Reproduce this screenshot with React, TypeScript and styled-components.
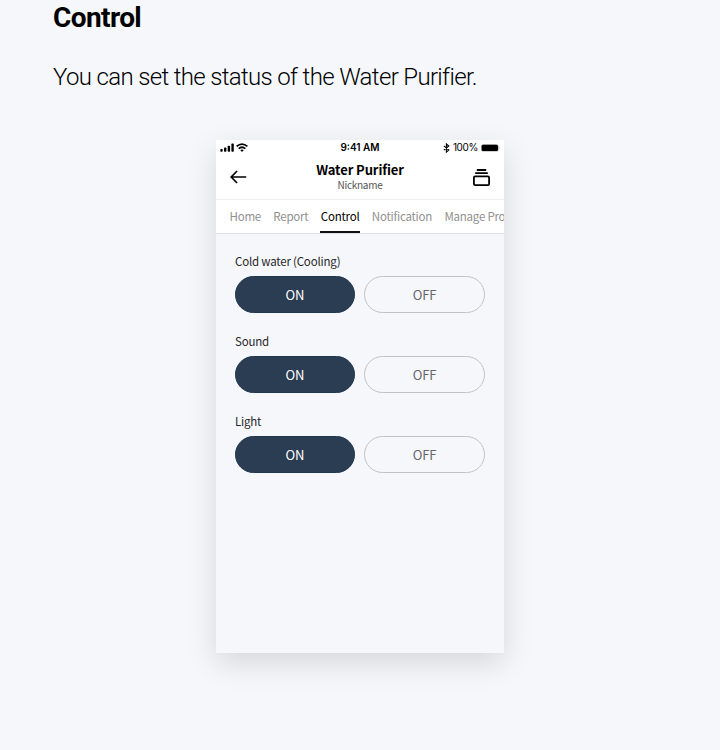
import React from "react";
import styled, { createGlobalStyle } from "styled-components";

const GlobalStyle = createGlobalStyle`
  *, *::before, *::after { box-sizing: border-box; }
  body { margin: 0; background: #f5f7fb; }
`;

const sans = `"Noto Sans CJK KR", "Noto Sans", sans-serif`;

const Page = styled.main`
  height: 750px;
  overflow: hidden;
  background: #f5f7fb;
  color: #000;
  font-family: Roboto, sans-serif;
`;

const Title = styled.h1`
  margin: 0 0 0 53px;
  padding-top: 1px;
  font-size: 28px;
  line-height: 34px;
  font-weight: 700;
  letter-spacing: -0.6px;
`;

const Lead = styled.p`
  margin: 27px 0 0 53px;
  font-size: 24px;
  line-height: 30px;
  font-weight: 300;
  letter-spacing: -0.655px;
  white-space: nowrap;
`;

const Phone = styled.section`
  width: 288px;
  height: 513px;
  margin: 48px auto 0;
  display: flex;
  flex-direction: column;
  background: #f5f7fb;
  box-shadow: 0 10px 28px rgba(0, 0, 0, 0.13);
  font-family: ${sans};
`;

const StatusBar = styled.div`
  height: 15px;
  padding: 0 4px;
  display: grid;
  grid-template-columns: 1fr auto 1fr;
  align-items: center;
  background: #fff;
  font-family: Inter, sans-serif;
  font-size: 10px;
  line-height: 15px;
`;

const StatusGroup = styled.div<{ $end?: boolean }>`
  display: flex;
  align-items: center;
  gap: ${(p) => (p.$end ? 3 : 2)}px;
  justify-content: ${(p) => (p.$end ? "flex-end" : "flex-start")};
`;

const Clock = styled.span`
  font-weight: 600;
`;

const Percent = styled.span`
  letter-spacing: -0.35px;
`;

const Header = styled.header`
  height: 44px;
  padding: 0 14px;
  display: grid;
  grid-template-columns: 17px 1fr 17px;
  align-items: center;
  background: #fff;
`;

const Heading = styled.div`
  display: flex;
  flex-direction: column;
  align-items: center;
`;

const Device = styled.strong`
  font-size: 13px;
  line-height: 16px;
  font-weight: 700;
  letter-spacing: -0.1px;
`;

const Nickname = styled.span`
  font-size: 10px;
  line-height: 14px;
  letter-spacing: -0.25px;
  color: #555;
`;

const Tabs = styled.nav`
  height: 35px;
  padding-left: 12.5px;
  display: flex;
  gap: 10.4px;
  overflow: hidden;
  background: #fff;
  border-top: 1px solid #eff0f2;
  border-bottom: 1px solid #dfe0e4;
`;

const Tab = styled.a<{ $active?: boolean }>`
  flex: none;
  height: 33px;
  padding: 0 1px;
  font-size: 11.5px;
  line-height: 33px;
  letter-spacing: -0.23px;
  white-space: nowrap;
  color: ${(p) => (p.$active ? "#000" : "#909090")};
  border-bottom: 2px solid ${(p) => (p.$active ? "#111" : "transparent")};
`;

const Settings = styled.div`
  padding: 18px 19px 0;
  display: flex;
  flex-direction: column;
  gap: 19px;
`;

const Label = styled.div`
  height: 24px;
  font-size: 11.5px;
  line-height: 18px;
  letter-spacing: -0.2px;
  color: #282828;
`;

const Choices = styled.div`
  display: grid;
  grid-template-columns: 120px 121px;
  gap: 9px;
`;

const Choice = styled.button<{ $on?: boolean }>`
  height: 37px;
  padding: 0;
  border: 1px solid ${(p) => (p.$on ? "#20384f" : "#c2c3c6")};
  border-radius: 19px;
  background: ${(p) => (p.$on ? "#2a3d53" : "transparent")};
  color: ${(p) => (p.$on ? "#fff" : "#666")};
  font-family: ${sans};
  font-size: 13px;
  line-height: 35px;
  letter-spacing: -0.1px;
`;

const Signal = () => (
  <svg width="14" height="9" viewBox="0 0 14 9">
    <rect x="0.3" y="6" width="2.4" height="2.8" rx="0.7" />
    <rect x="4" y="4.6" width="2.4" height="4.2" rx="0.7" />
    <rect x="7.7" y="2.7" width="2.4" height="6.1" rx="0.7" />
    <rect x="11.4" y="0.6" width="2.4" height="8.2" rx="0.7" />
  </svg>
);

const Wifi = () => (
  <svg width="12" height="9" viewBox="0 0 12 9" fill="none" stroke="#000" strokeWidth="1.7">
    <path d="M0.6 3.4 Q6 -1.3 11.4 3.4" />
    <path d="M2.7 5.7 Q6 2.8 9.3 5.7" />
    <path d="M4.2 7.1 Q6 5.7 7.8 7.1 L6 8.9 Z" fill="#000" stroke="none" />
  </svg>
);

const Bluetooth = () => (
  <svg width="7" height="10" viewBox="0 0 7 10" fill="none" stroke="#000" strokeWidth="1.1">
    <path d="M0.8 2.8 L5.8 7 L3.4 9.1 V0.9 L5.8 3 L0.8 7.2" />
  </svg>
);

const Battery = () => (
  <svg width="19" height="8" viewBox="0 0 19 8">
    <rect x="0.3" y="0.4" width="17.2" height="7.2" rx="2" fill="#fff" stroke="#aaa" strokeWidth="0.6" />
    <rect x="0.6" y="0.8" width="16.4" height="6.2" rx="1.5" />
    <path d="M18 2.7 Q19 4 18 5.3 Z" fill="#999" />
  </svg>
);

const BackArrow = () => (
  <svg width="17" height="14" viewBox="0 0 17 14" fill="none" stroke="#000" strokeWidth="1.7">
    <path d="M16.2 7 H1.5 M7.1 1 L1.2 7 L7.1 13" />
  </svg>
);

const Stack = () => (
  <svg width="17" height="17" viewBox="0 0 17 17" fill="none" stroke="#000" strokeWidth="1.8">
    <path d="M3.8 1 H13.2 M2.2 4.2 H14.8" />
    <rect x="0.9" y="7.4" width="15.2" height="8.7" rx="1.2" />
  </svg>
);

const settings = ["Cold water (Cooling)", "Sound", "Light"];
const tabs = ["Home", "Report", "Control", "Notification", "Manage Product"];

export default function App() {
  return (
    <Page>
      <GlobalStyle />
      <Title>Control</Title>
      <Lead>You can set the status of the Water Purifier.</Lead>
      <Phone>
        <StatusBar>
          <StatusGroup><Signal /><Wifi /></StatusGroup>
          <Clock>9:41 AM</Clock>
          <StatusGroup $end><Bluetooth /><Percent>100%</Percent><Battery /></StatusGroup>
        </StatusBar>
        <Header>
          <BackArrow />
          <Heading>
            <Device>Water Purifier</Device>
            <Nickname>Nickname</Nickname>
          </Heading>
          <Stack />
        </Header>
        <Tabs>
          {tabs.map((t) => <Tab key={t} $active={t === "Control"}>{t}</Tab>)}
        </Tabs>
        <Settings>
          {settings.map((s) => (
            <div key={s}>
              <Label>{s}</Label>
              <Choices>
                <Choice $on>ON</Choice>
                <Choice>OFF</Choice>
              </Choices>
            </div>
          ))}
        </Settings>
      </Phone>
    </Page>
  );
}
